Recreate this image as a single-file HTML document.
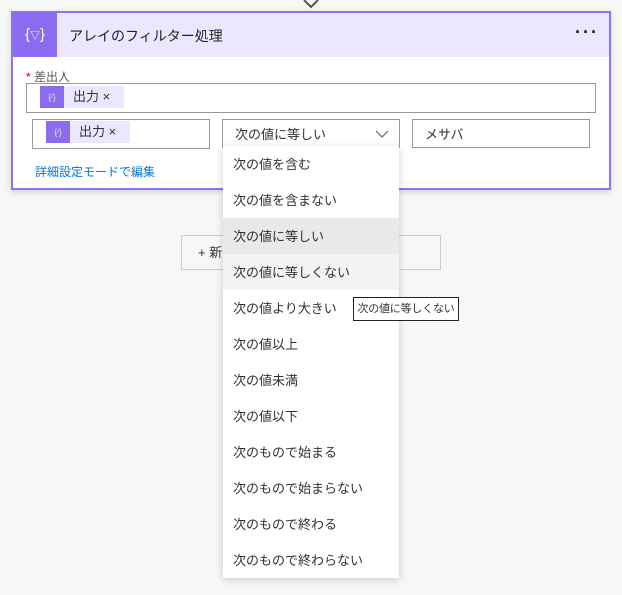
<!DOCTYPE html><html><head><meta charset="utf-8"><style>
body{margin:0;width:622px;height:595px;background:#f7f7f7;font-family:"Liberation Sans","Noto Sans CJK JP",sans-serif;position:relative;overflow:hidden;color:#323130}
.a{position:absolute}
.card{left:11px;top:11px;width:596px;height:175px;border:2px solid #8f72f4;background:#fff;box-shadow:0 2px 6px rgba(0,0,0,.15)}
.hdr{left:0;top:0;width:596px;height:44px;background:#ece6fe}
.ic{left:0;top:0;width:44px;height:44px;background:#8b6cf1;color:#fff;font-size:15px;text-align:center;line-height:44px}
.box{border:1px solid #999;background:#fff;box-sizing:border-box}
.tok{background:#ece6fe;height:22px;font-size:13px;line-height:22px}
.tok i{display:inline-block;width:24px;height:22px;background:#8b6cf1;vertical-align:top;color:#ddd;font-style:normal;font-size:9px;text-align:center;margin-right:9px}
.dd{left:223px;top:146px;width:176px;height:432px;background:#fff;box-shadow:0 2px 8px rgba(0,0,0,.18)}
.it{position:absolute;left:0;width:176px;height:36px;line-height:38px;font-size:13px;padding-left:10px;box-sizing:border-box}
</style></head><body>
<svg class="a" style="left:301px;top:0" width="20" height="11"><path d="M3 0 L10 7 L17 0" fill="none" stroke="#555" stroke-width="2"/></svg>
<div class="a card">
<div class="a hdr"><div class="a ic">{<span style="font-size:10px">▽</span>}</div>
<div class="a" style="left:56px;top:13px;font-size:14px;color:#222">アレイのフィルター処理</div>
<div class="a" style="left:562px;top:9px;font-size:18px;font-weight:bold;letter-spacing:2px;color:#222">···</div></div>
<div class="a" style="left:13px;top:55px;font-size:12px;color:#555"><span style="color:#c00">*</span> 差出人</div>
<div class="a box" style="left:13px;top:70px;width:570px;height:30px"></div>
<div class="a tok" style="left:27px;top:73px;width:84px"><i>{⁄}</i>出力 ×</div>
<div class="a box" style="left:19px;top:106px;width:178px;height:30px"></div>
<div class="a tok" style="left:33px;top:108px;width:84px"><i>{⁄}</i>出力 ×</div>
<div class="a box" style="left:209px;top:106px;width:178px;height:29px;font-size:13px;line-height:29px;padding-left:12px">次の値に等しい
<svg class="a" style="left:152px;top:10px" width="14" height="9"><path d="M1 1 L7 7 L13 1" fill="none" stroke="#666" stroke-width="1.2"/></svg></div>
<div class="a box" style="left:399px;top:106px;width:178px;height:29px;font-size:13px;line-height:29px;padding-left:12px">メサバ</div>
<div class="a" style="left:22px;top:150px;font-size:12px;color:#0078d4">詳細設定モードで編集</div>
</div>
<div class="a box" style="left:181px;top:235px;width:260px;height:35px;border-color:#ccc;background:#f7f7f7;font-size:13px;line-height:33px;padding-left:16px">+ 新</div>
<div class="a dd">
<div class="it" style="top:0">次の値を含む</div>
<div class="it" style="top:36px">次の値を含まない</div>
<div class="it" style="top:72px;background:#e9e9e9">次の値に等しい</div>
<div class="it" style="top:108px;background:#f3f3f3">次の値に等しくない</div>
<div class="it" style="top:144px">次の値より大きい</div>
<div class="it" style="top:180px">次の値以上</div>
<div class="it" style="top:216px">次の値未満</div>
<div class="it" style="top:252px">次の値以下</div>
<div class="it" style="top:288px">次のもので始まる</div>
<div class="it" style="top:324px">次のもので始まらない</div>
<div class="it" style="top:360px">次のもので終わる</div>
<div class="it" style="top:396px">次のもので終わらない</div>
</div>
<div class="a" style="left:353px;top:297px;width:106px;height:24px;border:1px solid #222;background:#fff;box-sizing:border-box;font-size:11px;line-height:22px;text-align:center;white-space:nowrap;letter-spacing:-0.2px">次の値に等しくない</div>
</body></html>
